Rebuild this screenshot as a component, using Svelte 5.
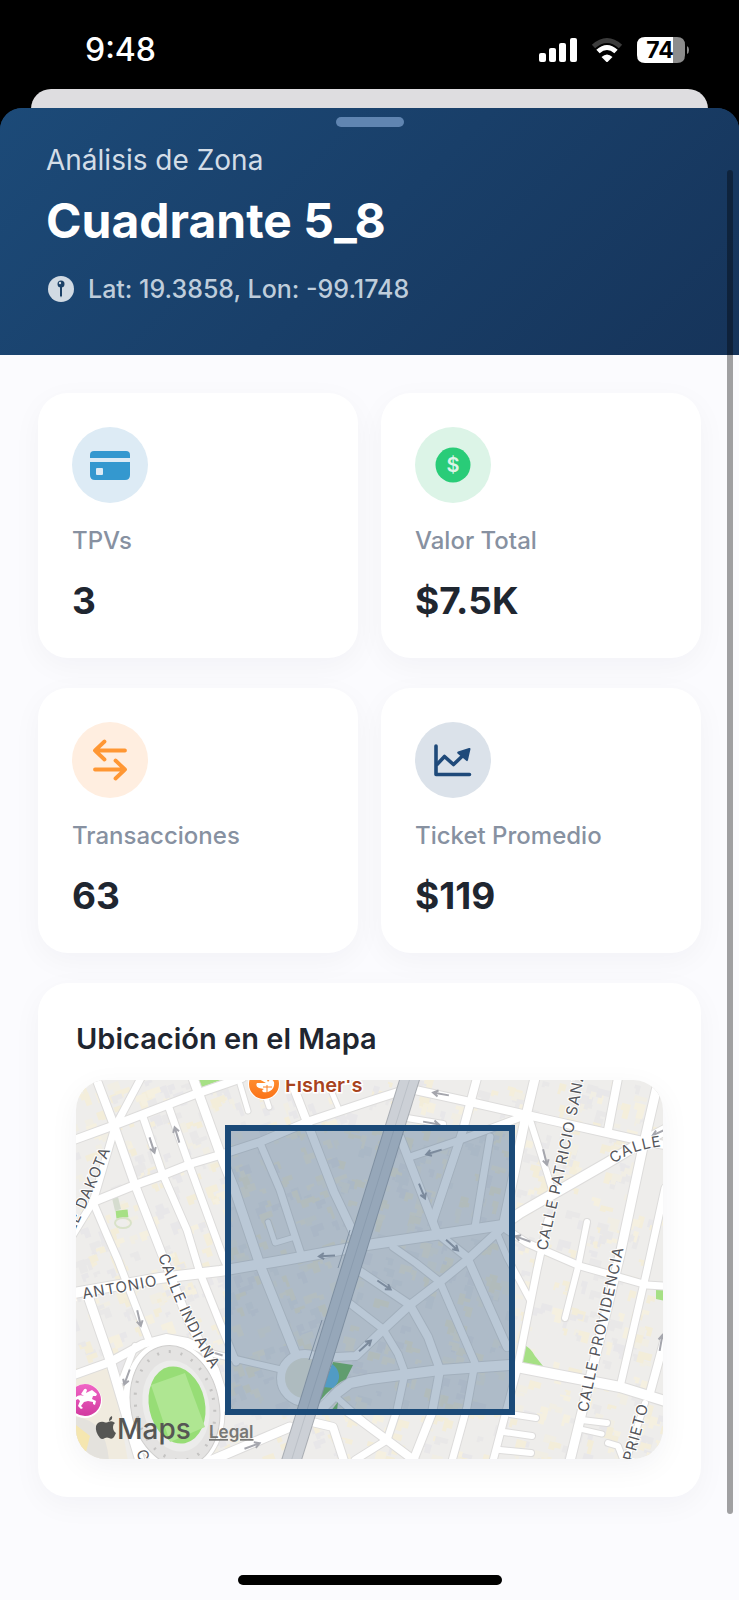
<script>
  const stats = [
    { id: 'tpv', label: 'TPVs', value: '3' },
    { id: 'total', label: 'Valor Total', value: '$7.5K' },
    { id: 'tx', label: 'Transacciones', value: '63' },
    { id: 'ticket', label: 'Ticket Promedio', value: '$119' }
  ];

  // Streets of the map canvas: [width, path]
  const streets = [
    [8, 'M20 -2 39 48 59 105 87 177 112 240 139 290 152 330'],
    [7, 'M65 -2 39 47 17 122 -4 156'],
    [8, 'M-2 60 39 45 117 15 166 -2'],
    [8, 'M17 122 59 105 87 95 117 83 144 75 184 62 231 42 294 21 322 12'],
    [7, 'M67 37 87 95 111 150 124 193 142 238 160 282'],
    [7, 'M92 25 114 87 147 177 153 190'],
    [9, 'M117 -2 144 73 158 108 184 185 222 280'],
    [7, 'M184 63 204 110 217 150 226 177'],
    [5, 'M192 142 199 163 219 157'],
    [8, 'M214 -2 231 42 258 112 277 152'],
    [5, 'M254 8 262 27'],
    [5, 'M164 4 172 31'],
    [5, 'M190 18 193 27'],
    [10, 'M-2 213 84 198 144 191 209 180 291 165 427 145 444 133 531 83 561 65 589 50'],
    [8, 'M339 10 394 22 451 35 531 53 571 62 589 65'],
    [6, 'M331 38 367 44'],
    [8, 'M401 -2 387 50 357 140'],
    [9, 'M459 -2 449 40 427 147'],
    [7, 'M451 35 384 60 334 77'],
    [8, 'M324 57 361 153 391 177 431 267'],
    [7, 'M414 57 399 147'],
    [6, 'M454 40 471 93 477 113'],
    [8, 'M542 -2 532 50'],
    [9, 'M583 -2 567 67 544 175 504 340 494 381'],
    [7, 'M589 108 571 190 544 307'],
    [7, 'M472 140 461 190 441 290 417 381'],
    [7, 'M431 150 451 163 504 186 571 205 589 206'],
    [6, 'M511 142 502 187 489 238'],
    [7, 'M317 167 340 183 364 202 399 283 391 327 376 381'],
    [8, 'M427 147 391 180 364 202 334 225 307 250 280 276 260 277'],
    [6, 'M421 153 431 177 454 220'],
    [8, 'M276 186 334 225 352 257 364 290 356 333 337 381'],
    [7, 'M272 222 307 249 322 274 329 293 321 330 311 360 279 380'],
    [10, 'M247 327 262 312 274 303 294 299 364 290 434 285'],
    [10, 'M441 287 544 307 589 321'],
    [8, 'M589 258 574 313'],
    [6, 'M569 323 550 381'],
    [8, 'M272 332 284 340 311 360 339 381'],
    [9, 'M214 347 134 381'],
    [8, 'M236 342 257 347 268 381'],
    [9, 'M11 213 34 280 64 381'],
    [7, 'M17 122 31 155 42 180 74 263'],
    [8, 'M-2 295 34 282 67 264 90 258 111 262 124 268'],
    [6, 'M134 273 207 290'],
    [6, 'M59 266 46 300'],
    [6, 'M261 318 294 347'],
    [6, 'M434 334 460 338'],
    [6, 'M428 352 456 356'],
    [6, 'M424 370 455 373'],
    [6, 'M506 340 531 343'],
    [5, 'M504 349 526 354'],
    [6, 'M532 363 542 366 547 379']
  ];

  // One-way arrows: x, y, heading in degrees
  const arrows = [
    [76, 65, 72], [101, 55, -107], [251, 176, 177], [365, 14, 190], [355, 43, 10],
    [358, 72, 163], [346, 111, 68], [469, 77, 76], [376, 165, 42], [447, 159, 200],
    [584, 52, 155], [63, 238, 77], [51, 297, 110], [139, 273, 198], [176, 366, -20],
    [289, 266, -42], [308, 205, 34], [585, 263, -80]
  ];

  const labels = [
    { id: 'dakota', d: 'M-6 161C10 128 24 96 48 36', text: 'LLE DAKOTA' },
    { id: 'antonio', d: 'M-10 222C24 216 62 210 104 201', text: 'N ANTONIO' },
    { id: 'indiana', d: 'M82 176C95 212 108 248 146 306', text: 'CALLE INDIANA' },
    { id: 'indiana-s', d: 'M60 372 76 412', text: 'CALLE' },
    { id: 'patricio', d: 'M471 171C483 112 498 60 514 -40', text: 'CALLE PATRICIO SANZ' },
    { id: 'east', d: 'M538 84C552 73 568 67 606 64', text: 'CALLE' },
    { id: 'providencia', d: 'M512 333C522 276 536 230 551 150', text: 'CALLE PROVIDENCIA' },
    { id: 'prieto', d: 'M557 382 579 302', text: 'PRIETO' }
  ];

  // Footprints scattered over the blocks, from a fixed seed
  let seed = 58;
  const rand = () => (seed = (seed * 16807) % 2147483647) / 2147483647;
  const tones = ['#f4eedb', '#f5f0e0', '#e9e8e8', '#f3edd9', '#e8e7e9', '#f1eee4'];
  const buildings = Array.from({ length: 1100 }, () => {
    const x = Math.round(rand() * 587);
    const y = Math.round(rand() * 379);
    const w = 5 + Math.round(rand() * 10);
    const h = 3 + Math.round(rand() * 5);
    const lean = x < 270 ? -20 : 15;
    return {
      d: `M0 0h${w}v${h}h-${Math.round(w / 2)}v${Math.round(h / 2)}h-${w - Math.round(w / 2)}z`,
      t: `translate(${x} ${y}) rotate(${lean + (rand() > 0.5 ? 90 : 0)})`,
      fill: tones[Math.floor(rand() * tones.length)]
    };
  });
</script>

<div class="screen">
  <header class="status">
    <time>9:48</time>
    <div class="indicators">
      <svg width="38" height="26" viewBox="0 0 38 26" fill="#fff" aria-hidden="true">
        <rect x="0" y="16" width="7" height="9" rx="2" />
        <rect x="10" y="11" width="7" height="14" rx="2" />
        <rect x="20" y="6" width="7" height="19" rx="2" />
        <rect x="31" y="1" width="7" height="24" rx="2" />
      </svg>
      <svg width="32" height="26" viewBox="0 0 32 26" fill="none" aria-hidden="true">
        <path d="M2.500 9.500Q16-2.500 29.500 9.500" stroke="#3c3c3c" stroke-width="5" />
        <path d="M7 14.500Q16 6.500 25 14.500" stroke="#fff" stroke-width="5" />
        <path d="M10.500 20Q16 15 21.500 20L17 24.500Q16 25.500 15 24.500Z" fill="#fff" />
      </svg>
      <svg width="52" height="26" viewBox="0 0 52 26" aria-hidden="true">
        <path d="M8 0H36V26H8Q0 26 0 18V8Q0 0 8 0Z" fill="#fff" />
        <path d="M36 0H40Q48 0 48 8V18Q48 26 40 26H36Z" fill="#8c8c8c" />
        <path d="M50 9Q52 10 52 13T50 17Z" fill="#8c8c8c" />
        <text x="23" y="21" class="charge">74</text>
      </svg>
    </div>
  </header>

  <div class="behind"></div>

  <main class="sheet">
    <span class="grabber"></span>
    <section class="hero">
      <p class="eyebrow">Análisis de Zona</p>
      <h1>Cuadrante 5_8</h1>
      <p class="coords">
        <svg width="28" height="28" viewBox="0 0 28 28" aria-hidden="true">
          <circle cx="15" cy="14" r="13" fill="#d1dae3" />
          <circle cx="15" cy="9" r="3.500" fill="#1b4066" />
          <circle cx="14" cy="8" r="1.200" fill="#d1dae3" />
          <path d="M14 12h2v8.500l-1 2-1-2z" fill="#1b4066" />
        </svg>
        <span>Lat: 19.3858, Lon: -99.1748</span>
      </p>
    </section>

    <div class="content">
      <section class="stats">
        {#each stats as stat}
          <article class="card stat">
            <span class="badge {stat.id}">
              <svg width="44" height="44" viewBox="0 0 44 44" fill="none" aria-hidden="true">
                {#if stat.id === 'tpv'}
                  <path d="M2 15V12Q2 8 6 8H38Q42 8 42 12V15Z" fill="#3498cf" />
                  <path fill-rule="evenodd" d="M2 19H42V32Q42 37 37 37H7Q2 37 2 32ZM9 25Q8 25 8 26V31Q8 32 9 32H14Q15 32 15 31V26Q15 25 14 25Z" fill="#3498cf" />
                {:else if stat.id === 'total'}
                  <circle cx="22" cy="22" r="17.500" fill="#29cc78" />
                  <text x="22" y="29" class="dollar">$</text>
                {:else if stat.id === 'tx'}
                  <path d="M37 12.500H7M16.500 3.500 7 12.500 16.500 21.500M7 31.500H37M27.500 22.500 37 31.500 27.500 40.500" stroke="#ff9734" stroke-width="3.800" stroke-linecap="round" stroke-linejoin="round" />
                {:else}
                  <path d="M5 8V36.500H38.500" stroke="#1f4a7a" stroke-width="3.600" stroke-linecap="round" stroke-linejoin="round" />
                  <path d="M5.500 27 13.500 18.500 22.500 26.500 33 16.500" stroke="#1f4a7a" stroke-width="3.600" stroke-linejoin="round" />
                  <path d="M27 13.500 38 10Q39.500 9.500 39.500 11L37 22Q36.500 24 35 22.500L26.500 15.500Q25.500 14 27 13.500Z" fill="#1f4a7a" />
                {/if}
              </svg>
            </span>
            <h2>{stat.label}</h2>
            <p>{stat.value}</p>
          </article>
        {/each}
      </section>

      <section class="card location">
        <h2>Ubicación en el Mapa</h2>
        <svg class="map" viewBox="0 0 587 379" role="img" aria-label="Mapa del cuadrante">
          <rect width="587" height="379" fill="#eeedeb" />
          {#each buildings as b}
            <path d={b.d} transform={b.t} fill={b.fill} />
          {/each}

          <g fill="#a6e085">
            <path d="M120-2H150L124 8Z" />
            <rect x="40" y="130" width="12" height="8" transform="rotate(-6 46 134)" />
            <path d="M447 264Q455 268 459 276L467 286 444 284Z" />
            <path d="M580 208 589 210V221L580 219Z" />
          </g>
          <path d="M36 118 42 117 45 129 39 131Z" fill="#d5dccf" />
          <ellipse cx="47" cy="143" rx="8" ry="5" fill="none" stroke="#d8e2c8" stroke-width="2" />
          <path d="M0 288 36 290 52 381H0Z" fill="#f0ebdf" />
          <path d="M0 337Q30 340 33 381H0Z" fill="#e4e2dd" />
          <path d="M0 345 14 356 10 372 0 366Z" fill="#f5e6b0" />

          <g fill="none" stroke="#dddcdb" stroke-linecap="round" stroke-linejoin="round">
            {#each streets as [w, d]}
              <path {d} stroke-width={w + 2} />
            {/each}
            <circle cx="229" cy="298" r="24" stroke-width="10" />
          </g>
          <ellipse cx="98" cy="326" rx="50" ry="66" transform="rotate(-12 98 326)" fill="#fff" stroke="#dddcda" />
          <g fill="none" stroke="#fff" stroke-linecap="round" stroke-linejoin="round">
            {#each streets as [w, d]}
              <path {d} stroke-width={w} />
            {/each}
            <circle cx="229" cy="298" r="24" stroke-width="8" fill="#eeecdf" />
          </g>

          <ellipse cx="99" cy="326" rx="44" ry="61" transform="rotate(-12 99 326)" fill="#e4e3e2" stroke="#cfcecd" />
          <ellipse cx="99" cy="326" rx="39" ry="55" transform="rotate(-12 99 326)" fill="none" stroke="#c4c3c2" stroke-width="3" stroke-dasharray="2 10" />
          <ellipse cx="100" cy="326" rx="33" ry="46" transform="rotate(-12 100 326)" fill="#ececeb" />
          <ellipse cx="101" cy="325" rx="28" ry="39" transform="rotate(-12 101 325)" fill="#97dd76" />
          <path d="M75 305 109 293 129 347 94 362Z" fill="#afe692" />

          <path d="M257 282 277 285 270 299Q258 304 243 322L249 304ZM254 332 262 322 261 331Z" fill="#7fc26b" />
          <path d="M256 284Q262 288 263 295T257 308L247 307Z" fill="#69bfe6" />

          <path d="M335-5 214 385" stroke="#a9adb3" stroke-width="20" />
          <path d="M335-5 214 385" stroke="#ccd0d6" stroke-width="18" />
          <path d="M335-5 214 385" stroke="#bbc0c7" stroke-width="1" />
          <path d="M274 150 262 188M246 240 233 280" stroke="#a9adb3" stroke-width="1" />

          <g fill="none" stroke="#a5a6ad" stroke-width="2">
            {#each arrows as [x, y, a]}
              <path d="M-8 0H7M3-3 8 0 3 3" transform="translate({x} {y}) rotate({a})" />
            {/each}
          </g>

          <g class="street-names">
            {#each labels as label}
              <path id="way-{label.id}" d={label.d} fill="none" stroke="none" />
              <text><textPath href="#way-{label.id}">{label.text}</textPath></text>
            {/each}
          </g>

          <rect x="152" y="48" width="284" height="284" fill="#1b4a78" fill-opacity="0.3" stroke="#1b4a78" stroke-width="6" />

          <defs>
            <linearGradient id="pin-food" x2="0" y2="1">
              <stop stop-color="#ff9a3c" />
              <stop offset="1" stop-color="#fb7318" />
            </linearGradient>
            <linearGradient id="pin-track" x2="0" y2="1">
              <stop stop-color="#f065c5" />
              <stop offset="1" stop-color="#d23aa0" />
            </linearGradient>
          </defs>
          <circle cx="188" cy="4" r="16" fill="#fff" />
          <circle cx="188" cy="4" r="15" fill="url(#pin-food)" />
          <path d="M181-2 190 3 181 3Q179 6 183 8L188 9Q185 10 187 12 191 13 194 11 199 8 198 2L195-2 192 2 190-2Z" fill="#fff" />
          <path d="M191 5V12M187 7H196" stroke="#fb8228" stroke-width="1" />
          <text x="209" y="12" class="poi">Fisher's</text>

          <circle cx="9" cy="321" r="17" fill="#fff" />
          <circle cx="9" cy="320" r="16" fill="url(#pin-track)" />
          <path d="M0 317Q3 314 8 316L10 313 14 311 16 310 21 314 20 316 17 316 16 319 20 321 19 325 17 324 17 322 12 321 8 322 5 326 7 328 5 329 2 326 4 321 2 319-2 321ZM7 311Q9 307 11 310L10 313 12 315 8 316 5 314Z" fill="#fff" />

          <g fill="#565654">
            <path d="M33 341Q33 337 36 336 37 340 33 341ZM37 347Q37 344 39 343 36 340 32 342 30 343 28 342 22 341 20 346 19 352 24 358 26 360 29 358 31 357 33 358 36 360 38 357L40 353Q37 351 37 347Z" />
            <text x="41" y="359" class="brand">Maps</text>
          </g>
          <a href="#legal"><text x="133" y="358" class="legal">Legal</text></a>
        </svg>
      </section>
    </div>

    <span class="scroll-thumb"></span>
    <footer><span class="home"></span></footer>
  </main>
</div>

<style>
  :global(body) {
    margin: 0;
    background: #000;
  }

  .screen {
    display: flex;
    flex-direction: column;
    min-height: 100vh;
    background: #000;
    font-family: Inter, Roboto, 'Liberation Sans', sans-serif;
  }

  h1,
  h2,
  p {
    margin: 0;
  }

  .status {
    display: flex;
    align-items: center;
    justify-content: space-between;
    height: 89px;
    padding: 10px 50px 0 85px;
    box-sizing: border-box;
    color: #fff;
  }

  time {
    font-size: 32px;
    font-weight: 500;
    line-height: 40px;
  }

  .indicators {
    display: flex;
    gap: 14px;
  }

  .charge {
    font-size: 23px;
    font-weight: 700;
    text-anchor: middle;
  }

  .behind {
    height: 42px;
    margin: 0 31px -23px;
    border-radius: 20px 20px 0 0;
    background: #dedde0;
  }

  .sheet {
    position: relative;
    display: flex;
    flex: 1;
    flex-direction: column;
    overflow: hidden;
    border-radius: 22px 22px 0 0;
    background: linear-gradient(#1a4370 100px, #fbfbfe 100px);
  }

  .grabber {
    position: absolute;
    top: 9px;
    left: 50%;
    width: 68px;
    height: 10px;
    margin-left: -34px;
    border-radius: 5px;
    background: #6085b1;
  }

  .hero {
    padding: 35px 46px 51px;
    background: linear-gradient(135deg, #1c4a78, #16345a);
    color: #fff;
  }

  .eyebrow {
    color: #d3dde7;
    font-size: 28px;
    line-height: 34px;
  }

  h1 {
    margin-top: 15px;
    font-size: 48px;
    font-weight: 700;
    line-height: 58px;
  }

  .coords {
    display: flex;
    align-items: center;
    gap: 14px;
    margin-top: 24px;
    color: #bfcddb;
    font-size: 25px;
    font-weight: 500;
    line-height: 30px;
  }

  .content {
    display: flex;
    flex-direction: column;
    gap: 30px;
    padding: 38px;
  }

  .stats {
    display: grid;
    grid-template-columns: 1fr 1fr;
    gap: 30px 23px;
  }

  .card {
    border-radius: 30px;
    background: #fff;
    box-shadow: 0 8px 30px rgba(20, 20, 50, 0.04);
  }

  .stat {
    padding: 34px;
  }

  .badge {
    display: grid;
    place-items: center;
    width: 76px;
    height: 76px;
    border-radius: 50%;
  }

  .tpv {
    background: #ddebf5;
  }

  .total {
    background: #dcf4e7;
  }

  .tx {
    background: #ffeee0;
  }

  .ticket {
    background: #dbe2ea;
  }

  .dollar {
    fill: #dcf4e7;
    font-size: 20px;
    font-weight: 600;
    text-anchor: middle;
  }

  .stat h2 {
    margin-top: 23px;
    color: #8791a1;
    font-size: 24px;
    font-weight: 500;
    line-height: 30px;
  }

  .stat p {
    margin-top: 22px;
    color: #1f2630;
    font-size: 37px;
    font-weight: 700;
    line-height: 46px;
  }

  .location {
    display: flex;
    flex-direction: column;
    gap: 23px;
    padding: 38px;
  }

  .location h2 {
    color: #1f2630;
    font-size: 29px;
    font-weight: 600;
    line-height: 36px;
  }

  .map {
    display: block;
    width: 100%;
    height: auto;
    border-radius: 30px;
    box-shadow: 0 8px 30px rgba(20, 20, 50, 0.05);
  }

  .street-names text {
    fill: #55565b;
    stroke: #fff;
    stroke-width: 2px;
    paint-order: stroke;
    font-size: 15px;
    font-weight: 400;
    letter-spacing: 1px;
  }

  .poi {
    fill: #a8431d;
    stroke: #fff;
    stroke-width: 3px;
    paint-order: stroke;
    font-size: 20px;
    font-weight: 600;
  }

  .brand {
    font-size: 28px;
    font-weight: 500;
  }

  .legal {
    fill: #777775;
    font-size: 17px;
    font-weight: 600;
    text-decoration: underline;
  }

  .scroll-thumb {
    position: absolute;
    top: 62px;
    right: 6px;
    bottom: 86px;
    width: 6px;
    border-radius: 3px;
    background: rgba(0, 0, 0, 0.36);
  }

  footer {
    display: flex;
    justify-content: center;
    margin-top: auto;
    padding: 36px 0 15px;
  }

  .home {
    width: 264px;
    height: 10px;
    border-radius: 5px;
    background: #000;
  }
</style>
